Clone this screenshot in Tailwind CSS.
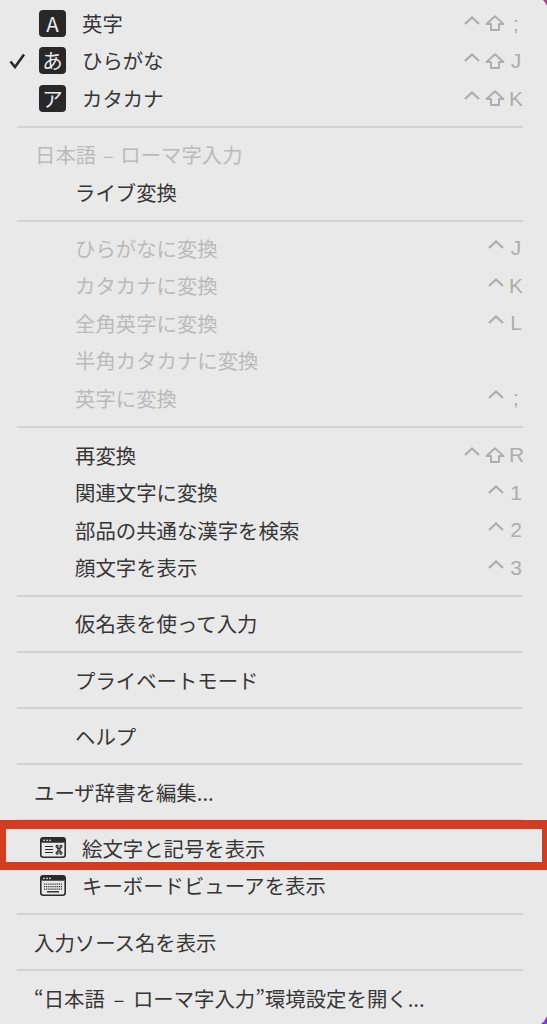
<!DOCTYPE html>
<html lang="ja"><head><meta charset="utf-8">
<script src="https://cdn.jsdelivr.net/npm/@tailwindcss/browser@4"></script>
</head>
<body class="m-0">
<div class="relative w-[547px] h-[1024px] overflow-hidden bg-[#e9e9e9] pt-[5.25px] text-[20.4px] leading-none text-[#363636] font-['Noto_Sans_CJK_JP','Noto_Sans',sans-serif]">

<svg class="hidden">
<symbol id="c" viewBox="0 0 16 9"><path d="M1 8L8 1.5L15 8" fill="none" stroke="#adadad" stroke-width="2.2"/></symbol>
<symbol id="s" viewBox="0 0 20 16"><path d="M10 1.2L18.5 9H14V15H6V9H1.5Z" fill="none" stroke="#adadad" stroke-width="1.9" stroke-linejoin="round"/></symbol>
</svg>

<section class="flex flex-col">
<div class="flex items-center h-[37.5px] pl-[39px] pr-[24px] pb-[2px]"><span class="w-[27px] h-[27px] rounded-[4px] bg-[#282828] text-[#ececec] flex items-center justify-center text-[20.5px]">A</span><span class="ml-[16px]">英字</span><span class="ml-auto flex items-center"><svg class="w-[16px] h-[9px] -mt-[6px]"><use href="#c"/></svg><svg class="w-[20px] h-[16px] ml-[5px]"><use href="#s"/></svg><span class="w-[14px] ml-[4px] text-center text-[21px] text-[#adadad] font-['Liberation_Sans']">;</span></span></div>
<div class="relative flex items-center h-[37.5px] pl-[39px] pr-[24px] pb-[2px]"><svg class="absolute left-[9px] top-[10px] w-[17px] h-[16px]" viewBox="0 0 17 16"><path d="M1.5 8.5L6 14L15 1.5" fill="none" stroke="#282828" stroke-width="2.6"/></svg><span class="w-[27px] h-[27px] rounded-[4px] bg-[#282828] text-[#ececec] flex items-center justify-center text-[20.5px]">あ</span><span class="ml-[16px]">ひらがな</span><span class="ml-auto flex items-center"><svg class="w-[16px] h-[9px] -mt-[6px]"><use href="#c"/></svg><svg class="w-[20px] h-[16px] ml-[5px]"><use href="#s"/></svg><span class="w-[14px] ml-[4px] text-center text-[21px] text-[#adadad] font-['Liberation_Sans']">J</span></span></div>
<div class="flex items-center h-[37.5px] pl-[39px] pr-[24px] pb-[2px]"><span class="w-[27px] h-[27px] rounded-[4px] bg-[#282828] text-[#ececec] flex items-center justify-center text-[20.5px]">ア</span><span class="ml-[16px]">カタカナ</span><span class="ml-auto flex items-center"><svg class="w-[16px] h-[9px] -mt-[6px]"><use href="#c"/></svg><svg class="w-[20px] h-[16px] ml-[5px]"><use href="#s"/></svg><span class="w-[14px] ml-[4px] text-center text-[21px] text-[#adadad] font-['Liberation_Sans']">K</span></span></div>
</section>
<div class="h-[2px] bg-[#d3d3d3] ml-[17px] mr-[24px] mt-[8.25px] mb-[9px]"></div>

<section class="flex flex-col">
<div class="flex items-center h-[37.5px] pl-[35px] pb-[3px] text-[#bababa] [word-spacing:2px]">日本語 – ローマ字入力</div>
<div class="flex items-center h-[37.5px] pl-[75px] pb-[3px]">ライブ変換</div>
</section>
<div class="h-[2px] bg-[#d3d3d3] ml-[17px] mr-[24px] mt-[7.5px] mb-[8.5px]"></div>

<section class="flex flex-col text-[#bababa]">
<div class="flex items-center h-[37.5px] pl-[75px] pr-[24px] pb-[2px]">ひらがなに変換<span class="ml-auto flex items-center"><svg class="w-[16px] h-[9px] -mt-[6px] mr-[1px]"><use href="#c"/></svg><span class="w-[14px] ml-[4px] text-center text-[21px] text-[#adadad] font-['Liberation_Sans']">J</span></span></div>
<div class="flex items-center h-[37.5px] pl-[75px] pr-[24px] pb-[2px]">カタカナに変換<span class="ml-auto flex items-center"><svg class="w-[16px] h-[9px] -mt-[6px] mr-[1px]"><use href="#c"/></svg><span class="w-[14px] ml-[4px] text-center text-[21px] text-[#adadad] font-['Liberation_Sans']">K</span></span></div>
<div class="flex items-center h-[37.5px] pl-[75px] pr-[24px] pb-[2px]">全角英字に変換<span class="ml-auto flex items-center"><svg class="w-[16px] h-[9px] -mt-[6px] mr-[1px]"><use href="#c"/></svg><span class="w-[14px] ml-[4px] text-center text-[21px] text-[#adadad] font-['Liberation_Sans']">L</span></span></div>
<div class="flex items-center h-[37.5px] pl-[75px] pr-[24px] pb-[2px]">半角カタカナに変換</div>
<div class="flex items-center h-[37.5px] pl-[75px] pr-[24px] pb-[2px]">英字に変換<span class="ml-auto flex items-center"><svg class="w-[16px] h-[9px] -mt-[6px] mr-[1px]"><use href="#c"/></svg><span class="w-[14px] ml-[4px] text-center text-[21px] text-[#adadad] font-['Liberation_Sans']">;</span></span></div>
</section>
<div class="h-[2px] bg-[#d3d3d3] ml-[17px] mr-[24px] mt-[8.5px] mb-[9px]"></div>

<section class="flex flex-col">
<div class="flex items-center h-[37.5px] pl-[75px] pr-[24px] pb-[2px]">再変換<span class="ml-auto flex items-center"><svg class="w-[16px] h-[9px] -mt-[6px]"><use href="#c"/></svg><svg class="w-[20px] h-[16px] ml-[5px]"><use href="#s"/></svg><span class="w-[14px] ml-[4px] text-center text-[21px] text-[#adadad] font-['Liberation_Sans']">R</span></span></div>
<div class="flex items-center h-[37.5px] pl-[75px] pr-[24px] pb-[2px]">関連文字に変換<span class="ml-auto flex items-center"><svg class="w-[16px] h-[9px] -mt-[6px] mr-[1px]"><use href="#c"/></svg><span class="w-[14px] ml-[4px] text-center text-[21px] text-[#adadad] font-['Liberation_Sans']">1</span></span></div>
<div class="flex items-center h-[37.5px] pl-[75px] pr-[24px] pb-[2px]">部品の共通な漢字を検索<span class="ml-auto flex items-center"><svg class="w-[16px] h-[9px] -mt-[6px] mr-[1px]"><use href="#c"/></svg><span class="w-[14px] ml-[4px] text-center text-[21px] text-[#adadad] font-['Liberation_Sans']">2</span></span></div>
<div class="flex items-center h-[37.5px] pl-[75px] pr-[24px] pb-[2px]">顔文字を表示<span class="ml-auto flex items-center"><svg class="w-[16px] h-[9px] -mt-[6px] mr-[1px]"><use href="#c"/></svg><span class="w-[14px] ml-[4px] text-center text-[21px] text-[#adadad] font-['Liberation_Sans']">3</span></span></div>
</section>
<div class="h-[2px] bg-[#d3d3d3] ml-[17px] mr-[24px] my-[8px]"></div>
<div class="flex items-center h-[37.5px] pl-[75px] pb-[2px]">仮名表を使って入力</div>
<div class="h-[2px] bg-[#d3d3d3] ml-[17px] mr-[24px] my-[8.25px]"></div>
<div class="flex items-center h-[37.5px] pl-[75px]">プライベートモード</div>
<div class="h-[2px] bg-[#d3d3d3] ml-[17px] mr-[24px] my-[8.25px]"></div>
<div class="flex items-center h-[37.5px] pl-[75px]">ヘルプ</div>
<div class="h-[2px] bg-[#d3d3d3] ml-[17px] mr-[24px] my-[8.25px]"></div>
<div class="flex items-center h-[37.5px] pl-[34px]">ユーザ辞書を編集...</div>
<div class="h-[2px] bg-[#d3d3d3] ml-[17px] mr-[24px] my-[8.25px]"></div>

<section class="flex flex-col">
<div class="flex items-center h-[37.5px] pl-[40px]"><svg class="w-[26px] h-[21px]" viewBox="0 0 26 21"><rect x="0.8" y="0.8" width="24.4" height="19.4" rx="2.5" fill="none" stroke="#2b2b2b" stroke-width="1.6"/><rect x="0.8" y="0.8" width="24.4" height="5" rx="2" fill="#2b2b2b"/><circle cx="4" cy="3.3" r="0.9" fill="#e9e9e9"/><circle cx="7" cy="3.3" r="0.9" fill="#e9e9e9"/><circle cx="10" cy="3.3" r="0.9" fill="#e9e9e9"/><path d="M5 9.5H13M5 12.5H13M5 15.5H13" stroke="#2b2b2b" stroke-width="1.2"/><path d="M18 11.5H20V14H18ZM18 11.5L16.6 10.2A1 1 0 1 1 18 9.6ZM20 11.5L21.4 10.2A1 1 0 1 0 20 9.6ZM18 14L16.6 15.3A1 1 0 1 0 18 15.9ZM20 14L21.4 15.3A1 1 0 1 1 20 15.9Z" fill="none" stroke="#2b2b2b" stroke-width="1.1"/></svg><span class="ml-[16px]">絵文字と記号を表示</span></div>
<div class="flex items-center h-[37.5px] pl-[40px]"><svg class="w-[26px] h-[21px]" viewBox="0 0 26 21"><rect x="0.8" y="0.8" width="24.4" height="19.4" rx="2.5" fill="none" stroke="#2b2b2b" stroke-width="1.6"/><rect x="0.8" y="0.8" width="24.4" height="5" rx="2" fill="#2b2b2b"/><circle cx="4" cy="3.3" r="0.9" fill="#e9e9e9"/><circle cx="7" cy="3.3" r="0.9" fill="#e9e9e9"/><circle cx="10" cy="3.3" r="0.9" fill="#e9e9e9"/><path d="M4 9.2H22M4 11.7H22M4 14.2H22" stroke="#2b2b2b" stroke-width="1.3" stroke-dasharray="1.2 0.9"/><path d="M7 16.8H19" stroke="#2b2b2b" stroke-width="1.4"/></svg><span class="ml-[16px]">キーボードビューアを表示</span></div>
</section>
<div class="h-[2px] bg-[#d3d3d3] ml-[17px] mr-[24px] mt-[9.25px] mb-[8.25px]"></div>
<div class="flex items-center h-[37.5px] pl-[34px]">入力ソース名を表示</div>
<div class="h-[2px] bg-[#d3d3d3] ml-[17px] mr-[24px] my-[8.25px]"></div>
<div class="flex items-center h-[37.5px] pl-[34px] [word-spacing:4px]">“日本語 – ローマ字入力”環境設定を開く...</div>

<div class="absolute left-0 top-[820px] w-[547px] h-[50px] border-[#d23c20] border-t-[9px] border-b-[8px] border-l-[6px] border-r-[5px]"></div>
<svg class="absolute right-0 top-0 w-[4px] h-[6px]" viewBox="0 0 4 6"><path d="M0 0H4V6Q2.5 2.5 0 0Z" fill="#a14b87"/></svg>
<svg class="absolute right-0 bottom-0 w-[6px] h-[8px]" viewBox="0 0 6 8"><path d="M6 0V8H0Q4 5 6 0Z" fill="#7d3fc4"/></svg>
</div>
</body></html>
